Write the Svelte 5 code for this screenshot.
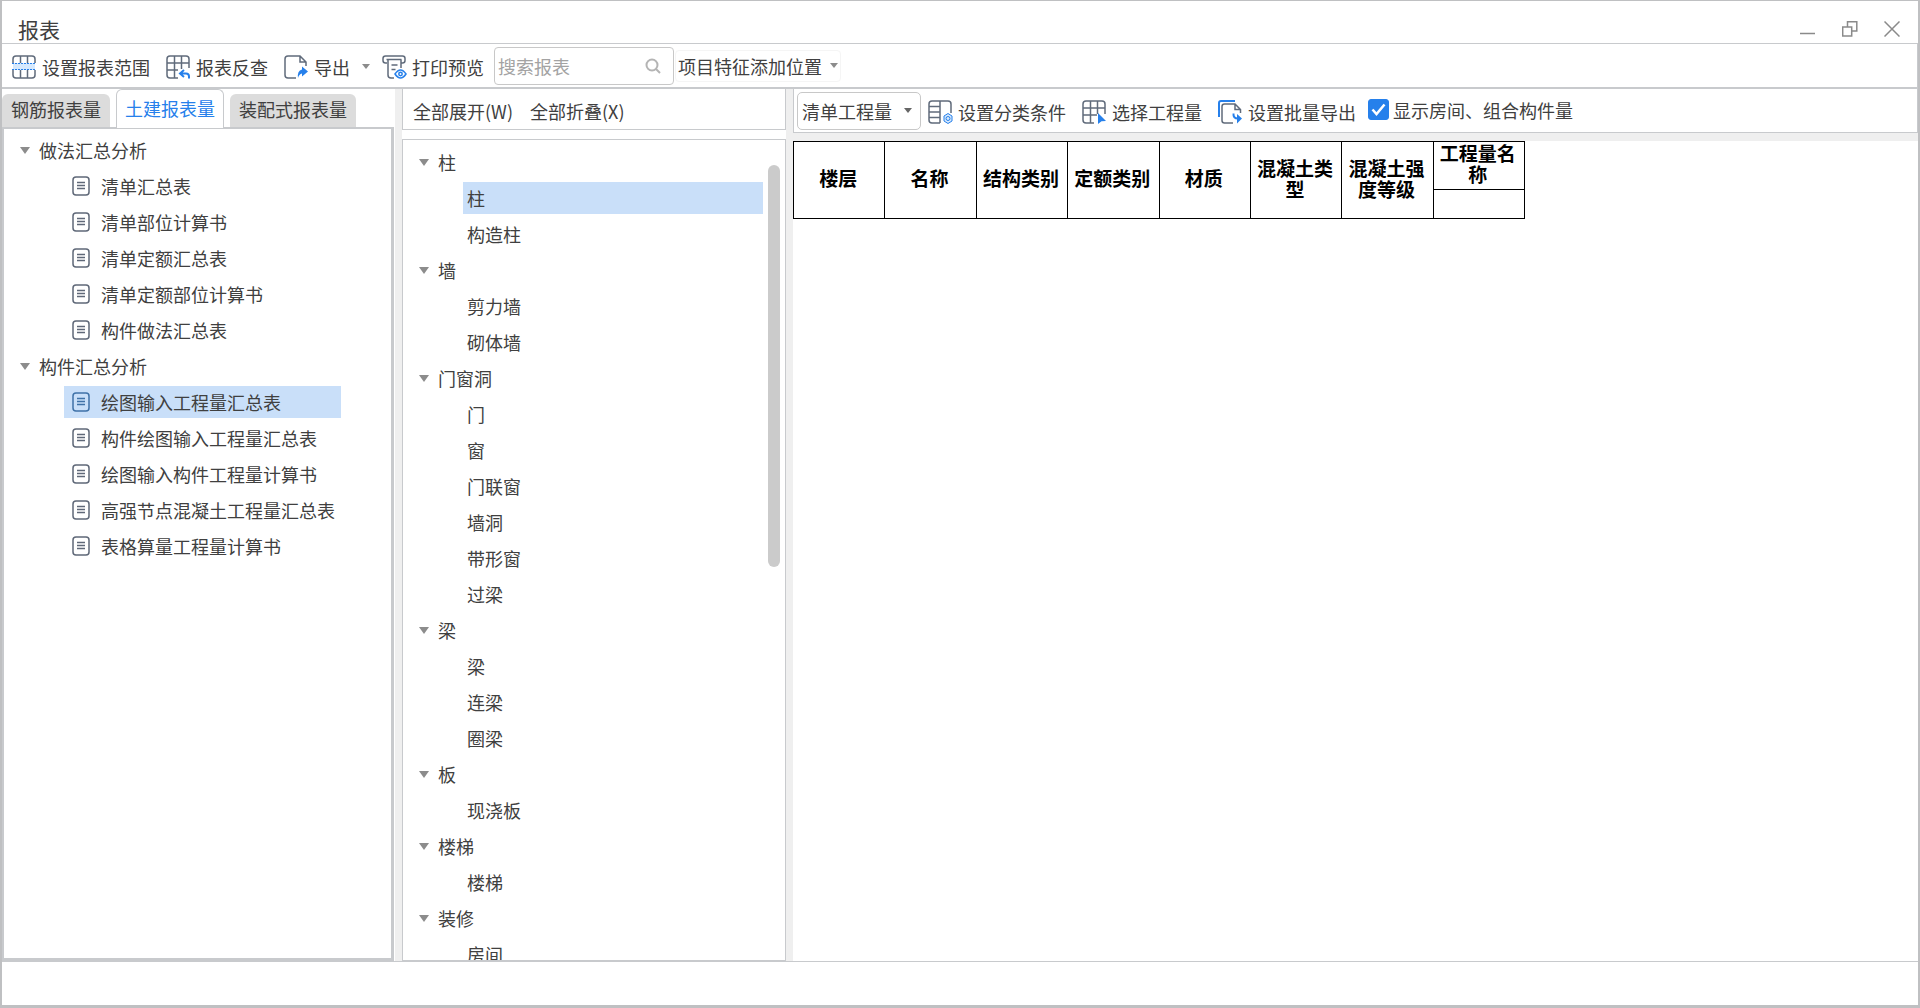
<script lang="ts">
	interface TreeGroup {
		name: string;
		items: string[];
	}

	const tabs = ['钢筋报表量', '土建报表量', '装配式报表量'];

	const reports: TreeGroup[] = [
		{
			name: '做法汇总分析',
			items: ['清单汇总表', '清单部位计算书', '清单定额汇总表', '清单定额部位计算书', '构件做法汇总表']
		},
		{
			name: '构件汇总分析',
			items: [
				'绘图输入工程量汇总表',
				'构件绘图输入工程量汇总表',
				'绘图输入构件工程量计算书',
				'高强节点混凝土工程量汇总表',
				'表格算量工程量计算书'
			]
		}
	];

	const components: TreeGroup[] = [
		{ name: '柱', items: ['柱', '构造柱'] },
		{ name: '墙', items: ['剪力墙', '砌体墙'] },
		{ name: '门窗洞', items: ['门', '窗', '门联窗', '墙洞', '带形窗', '过梁'] },
		{ name: '梁', items: ['梁', '连梁', '圈梁'] },
		{ name: '板', items: ['现浇板'] },
		{ name: '楼梯', items: ['楼梯'] },
		{ name: '装修', items: ['房间'] }
	];

	const columns = ['楼层', '名称', '结构类别', '定额类别', '材质', '混凝土类型', '混凝土强度等级'];

	let activeTab = $state('土建报表量');
	let activeReport = $state('绘图输入工程量汇总表');
	let activeComponent = $state('柱/柱');
	let collapsed = $state<string[]>([]);
	let showRooms = $state(true);
	let search = $state('');

	function toggle(name: string) {
		collapsed = collapsed.includes(name)
			? collapsed.filter((n) => n !== name)
			: [...collapsed, name];
	}

	function expandAll() {
		collapsed = [];
	}

	function collapseAll() {
		collapsed = components.map((g) => g.name);
	}
</script>

{#snippet caret()}
	<svg class="caret" width="8" height="5" viewBox="0 0 8 5" aria-hidden="true">
		<path d="M0 0h8L4 5z" fill="currentColor" />
	</svg>
{/snippet}

{#snippet twisty()}
	<svg class="twisty" width="10" height="7" viewBox="0 0 10 7" aria-hidden="true">
		<path d="M0 0h10L5 7z" fill="#8c8c8c" />
	</svg>
{/snippet}

<div class="window">
	<header class="titlebar">
		<h1>报表</h1>
		<div class="window-buttons">
			<button type="button" aria-label="最小化">
				<svg width="16" height="16" viewBox="0 0 16 16"><path d="M0 12.5h15" /></svg>
			</button>
			<button type="button" aria-label="还原">
				<svg width="16" height="16" viewBox="0 0 16 16">
					<path d="M.7 6h9v9h-9zM5.500 6V.7h9.300V10H9.700" />
				</svg>
			</button>
			<button type="button" aria-label="关闭">
				<svg width="16" height="16" viewBox="0 0 16 16"><path d="M.5.5l15 15M15.500.5l-15 15" /></svg>
			</button>
		</div>
	</header>

	<div class="toolbar">
		<button type="button" class="tool">
			<svg class="icon" viewBox="0 0 24 24">
				<rect x="1" y="8" width="22" height="7" fill="#d6e9fd" stroke="none" />
				<path d="M1 8V4q0-3 3-3h16q3 0 3 3v4M1 15v5q0 3 3 3h16q3 0 3-3v-5M8.500 1v7M15.500 1v7M8.500 15v8M15.500 15v8" />
				<path class="blue" stroke-width="1" stroke-dasharray="2 1" d="M0 8.500h24M0 14.500h24" />
			</svg>
			设置报表范围
		</button>
		<button type="button" class="tool">
			<svg class="icon" viewBox="0 0 24 24">
				<path d="M12 23H4q-3 0-3-3V4q0-3 3-3h16q3 0 3 3v9M1 8h22M1 15h11M8.500 1v22M15.500 1v13" />
				<path class="blue" stroke-width="2" d="M23 23.500v-2q0-3-3-3h-5M18 15l-4 3.500 4 3.500" />
			</svg>
			报表反查
		</button>
		<button type="button" class="tool">
			<svg class="icon" viewBox="0 0 24 24">
				<path d="M12 23H4q-3 0-3-3V4q0-3 3-3h12l6 6v4M16 1v6h6" />
				<path class="fill" d="M18 11.500l6 5-6 5v-3q-3 .5-4 4.500 -1-7.500 4-8.500z" />
			</svg>
			导出
			{@render caret()}
		</button>
		<button type="button" class="tool preview">
			<svg class="icon" viewBox="0 0 24 24">
				<path d="M5 8H3.500Q1 8 1 5.500v-2Q1 1 3.500 1h17Q23 1 23 3.500v2Q23 8 20.500 8H19M4.500 4.500h15M6 4.500V20q0 3 3 3h3M19 4.500V13M9.500 10h6M9.500 14.500h4" />
				<path class="blue" fill="#fff" d="M13 19q5.500-8 11 0-5.500 8-11 0z" />
				<circle class="blue" cx="18.500" cy="19" r="1.700" />
			</svg>
			打印预览
		</button>
		<label class="search">
			<input type="text" placeholder="搜索报表" aria-label="搜索报表" bind:value={search} />
			<svg width="16" height="16" viewBox="0 0 16 16" fill="none" stroke="#b4b4b4" stroke-width="2">
				<circle cx="7" cy="7" r="5.500" /><path d="M11 11l4 4" />
			</svg>
		</label>
		<button type="button" class="tool position">
			项目特征添加位置
			{@render caret()}
		</button>
	</div>

	<main>
		<section class="reports">
			<div class="tabs" role="tablist">
				{#each tabs as tab (tab)}
					<button
						type="button"
						role="tab"
						class:active={activeTab === tab}
						aria-selected={activeTab === tab}
						onclick={() => (activeTab = tab)}
					>
						{tab}
					</button>
				{/each}
			</div>
			<div class="report-tree">
				{#each reports as group (group.name)}
					<button type="button" class="group" onclick={() => toggle(group.name)}>
						{@render twisty()}{group.name}
					</button>
					{#if !collapsed.includes(group.name)}
						{#each group.items as item (item)}
							<button
								type="button"
								class="leaf"
								class:selected={activeReport === item}
								onclick={() => (activeReport = item)}
							>
								<svg width="18" height="20" viewBox="0 0 18 20" aria-hidden="true">
									<rect x="1" y="1" width="16" height="18" rx="3" />
									<path d="M5 6.500h8M5 9.500h8M5 12.500h8" />
								</svg>
								{item}
							</button>
						{/each}
					{/if}
				{/each}
			</div>
		</section>

		<div class="splitter"></div>

		<section class="components">
			<div class="tree-actions">
				<button type="button" onclick={expandAll}>全部展开(W)</button>
				<button type="button" onclick={collapseAll}>全部折叠(X)</button>
			</div>
			<div class="component-tree">
				<div class="rows">
					{#each components as group (group.name)}
						<button type="button" class="group" onclick={() => toggle(group.name)}>
							{@render twisty()}{group.name}
						</button>
						{#if !collapsed.includes(group.name)}
							{#each group.items as item (item)}
								{@const key = `${group.name}/${item}`}
								<button
									type="button"
									class="leaf"
									class:selected={activeComponent === key}
									onclick={() => (activeComponent = key)}
								>
									{item}
								</button>
							{/each}
						{/if}
					{/each}
				</div>
				<span class="thumb" aria-hidden="true"></span>
			</div>
		</section>

		<div class="splitter"></div>

		<section class="report">
			<div class="report-bar">
				<div class="quantity">
					<select aria-label="工程量类型">
						<option>清单工程量</option>
					</select>
					{@render caret()}
				</div>
				<button type="button" class="tool">
					<svg class="icon" viewBox="0 0 24 24">
						<path d="M12 23H4q-3 0-3-3V4q0-3 3-3h16q3 0 3 3v9M12 1v22M1 6.500h11M1 12h11M1 17.500h11" />
						<path class="blue" fill="#d6e9fd" stroke-width="1" d="M20 13.500l4 2.500v5l-4 2.500-4-2.500v-5z" />
						<circle class="blue" stroke-width="1" cx="20" cy="18.500" r="2" />
					</svg>
					设置分类条件
				</button>
				<button type="button" class="tool">
					<svg class="icon" viewBox="0 0 24 24">
						<path d="M12 23H4q-3 0-3-3V4q0-3 3-3h16q3 0 3 3v10M1 8h22M1 15h14M8.500 1v22M15.500 1v13" />
						<path class="fill" d="M16 13l8 8-4.500.200L16 24z" />
					</svg>
					选择工程量
				</button>
				<button type="button" class="tool">
					<svg class="icon" viewBox="0 0 24 24">
						<path class="blue" stroke-width="2" d="M1 17V3q0-2 2-2h14" />
						<path d="M15 23H6.500Q4 23 4 20.500v-14Q4 4 6.500 4H17l5.500 5.500V13M17 4v5.500h5.500" />
						<path class="blue" stroke-width="2" d="M15.500 13.500q-.5 5 4.500 5" />
						<path class="fill" d="M19 14l5 4.500-5 5z" />
					</svg>
					设置批量导出
				</button>
				<label class="rooms">
					<input type="checkbox" bind:checked={showRooms} />
					<svg class="tick" width="21" height="21" viewBox="0 0 21 21" aria-hidden="true">
						<path d="M4.500 10.500l4 4.500L16.500 5.500" />
					</svg>
					显示房间、组合构件量
				</label>
			</div>
			<div class="sheet">
				<table>
					<thead>
						<tr>
							{#each columns as column (column)}
								<th rowspan="2">{column}</th>
							{/each}
							<th class="top">工程量名称</th>
						</tr>
						<tr><th class="blank"></th></tr>
					</thead>
				</table>
			</div>
		</section>
	</main>

	<footer></footer>
</div>

<style>
	:global(body) {
		background: #fff;
	}

	.window {
		--line: #c8cacd;
		--edge: #bfc0c2;
		--select: #c9dff9;
		--blue: #2680eb;
		box-sizing: border-box;
		display: flex;
		flex-direction: column;
		height: 100vh;
		border: 2px solid var(--edge);
		border-top-width: 1px;
		border-bottom-width: 3px;
		background: #fff;
		color: #404040;
		font-family: 'Noto Sans CJK SC', sans-serif;
		font-size: 18px;
		line-height: 24px;
	}

	.window * {
		box-sizing: border-box;
	}

	button,
	input,
	select {
		appearance: none;
		margin: 0;
		padding: 0;
		border: none;
		background: none;
		color: inherit;
		font: inherit;
		text-align: left;
		white-space: nowrap;
	}

	.titlebar {
		display: flex;
		flex: none;
		align-items: center;
		justify-content: space-between;
		height: 43px;
		padding: 14px 18px 0 16px;
		border-bottom: 1px solid var(--line);
	}

	h1 {
		margin: 0;
		font-size: 21px;
		font-weight: 400;
	}

	.window-buttons {
		display: flex;
		gap: 26px;
	}

	.window-buttons button {
		display: flex;
	}

	.window-buttons svg {
		fill: none;
		stroke: #8a8a8a;
		stroke-width: 1.5;
	}

	.toolbar {
		display: flex;
		flex: none;
		align-items: center;
		height: 45px;
		padding-left: 10px;
		border-right: 1px solid var(--line);
		border-bottom: 2px solid var(--line);
	}

	.tool {
		display: flex;
		align-items: center;
		margin-right: 16px;
		padding-top: 2px;
	}

	.icon {
		flex: none;
		width: 24px;
		height: 24px;
		margin-right: 6px;
		fill: none;
		stroke: #606b7b;
		stroke-width: 1.5;
		overflow: visible;
	}

	.icon .blue {
		stroke: var(--blue);
	}

	.icon .fill {
		fill: var(--blue);
		stroke: none;
	}

	.caret {
		margin-left: 12px;
		color: #8c8c8c;
	}

	.tool.preview {
		margin: 0 10px 0 -4px;
	}

	.search {
		display: flex;
		align-items: center;
		width: 180px;
		height: 38px;
		padding: 0 12px 0 3px;
		border: 1px solid #c8c8c8;
		border-radius: 4px;
	}

	.search input {
		flex: 1;
		min-width: 0;
		outline: none;
	}

	.search input::placeholder {
		color: #a3a3a3;
	}

	.tool.position {
		height: 32px;
		margin-left: 1px;
		padding: 0 2px;
		border: 1px solid #f5f5f5;
		border-radius: 4px;
	}

	.position .caret {
		margin-left: 8px;
	}

	main {
		display: flex;
		flex: 1;
		min-height: 0;
	}

	.reports {
		display: flex;
		flex-direction: column;
		width: 393px;
	}

	.tabs {
		display: flex;
		align-items: flex-end;
		gap: 6px;
		height: 39px;
	}

	.tabs button {
		height: 33px;
		margin-bottom: 1px;
		padding: 0 9px 3px;
		border-radius: 6px 6px 0 0;
		background: #dcdcdc;
	}

	.tabs .active {
		position: relative;
		height: 39px;
		margin-bottom: 0;
		padding: 0 8px 3px;
		border: 1px solid var(--line);
		border-bottom: none;
		background: #fff;
		color: var(--blue);
	}

	.report-tree,
	.rows {
		display: flex;
		flex-direction: column;
		align-items: flex-start;
		gap: 4px;
		overflow: hidden;
	}

	.report-tree {
		flex: 1;
		min-height: 0;
		margin: -1px 1px 0 0;
		padding: 5px 50px 0 16px;
		border: 2px solid var(--line);
		border-width: 2px 3px 3px 2px;
	}

	.group,
	.leaf {
		display: flex;
		flex: none;
		align-items: center;
		height: 32px;
	}

	.twisty {
		margin-right: 9px;
	}

	.leaf {
		align-self: stretch;
		margin-left: 44px;
	}

	.leaf.selected {
		background: var(--select);
	}

	.report-tree .leaf {
		padding-left: 8px;
	}

	.leaf svg {
		flex: none;
		margin-right: 11px;
		fill: none;
		stroke: #5f6878;
		stroke-width: 1.5;
	}

	.leaf.selected svg {
		stroke: #3f72a8;
	}

	.splitter {
		flex: none;
		width: 7px;
		background: #efefef;
	}

	.components {
		display: flex;
		flex-direction: column;
		gap: 9px;
		width: 384px;
	}

	.tree-actions {
		display: flex;
		flex: none;
		align-items: center;
		gap: 17px;
		height: 41px;
		padding: 4px 10px 0;
		border: 1px solid var(--line);
		border-top: none;
	}

	.component-tree {
		position: relative;
		flex: 1;
		min-height: 0;
		border: 1px solid var(--line);
	}

	.rows {
		height: 100%;
		padding: 6px 22px 0 16px;
	}

	.component-tree .leaf {
		padding-left: 4px;
	}

	.thumb {
		position: absolute;
		top: 25px;
		right: 5px;
		width: 12px;
		height: 49%;
		border-radius: 6px;
		background: #cbcbcb;
	}

	.report {
		display: flex;
		flex: 1;
		flex-direction: column;
		min-width: 0;
	}

	.report-bar {
		display: flex;
		flex: none;
		align-items: center;
		height: 44px;
		padding: 0 0 0 3px;
		border: 1px solid var(--line);
		border-top: none;
	}

	.quantity {
		display: flex;
		align-items: center;
		width: 124px;
		height: 38px;
		margin-right: 7px;
		border: 1px solid #c8c8c8;
		border-radius: 5px;
	}

	.quantity select {
		width: 100%;
		height: 100%;
		padding-left: 4px;
	}

	.quantity .caret {
		flex: none;
		margin: 0 8px 0 -16px;
		color: #666;
		pointer-events: none;
	}

	.rooms {
		position: relative;
		display: flex;
		align-items: center;
		gap: 4px;
		margin-left: -4px;
		padding-bottom: 2px;
	}

	.rooms input {
		width: 21px;
		height: 21px;
		border: 1px solid #b5b5b5;
		border-radius: 3px;
	}

	.rooms input:checked {
		border-color: var(--blue);
		background: var(--blue);
	}

	/* White on white when the box is cleared, so it needs no toggle. */
	.tick {
		position: absolute;
		left: 0;
		fill: none;
		stroke: #fff;
		stroke-width: 2.5;
		pointer-events: none;
	}

	.sheet {
		flex: 1;
		border-top: 8px solid #efefef;
	}

	table {
		width: 732px;
		border-collapse: collapse;
		table-layout: fixed;
		color: #000;
		font-size: 19px;
		line-height: 21px;
	}

	th {
		height: 29px;
		padding: 0 4px 5px 2px;
		border: 1px solid #000;
		font-weight: 700;
	}

	th.top {
		height: 48px;
	}

	footer {
		flex: none;
		height: 44px;
		border-top: 1px solid var(--line);
	}
</style>
